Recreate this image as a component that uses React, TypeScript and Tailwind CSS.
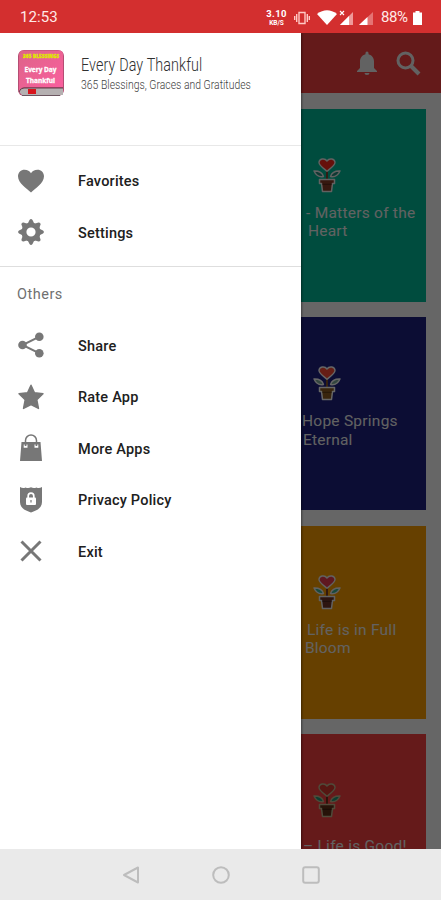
import React from 'react';

type Palette = { heart: string; leaf: string; pot: string; line: string };

type Card = {
  bg: string;
  textTop: string;
  lines: { text: string; className: string }[];
  palette: Palette;
};

const cards: Card[] = [
  {
    bg: 'bg-[#00bf9c]',
    textTop: 'pt-[11px]',
    lines: [
      { text: '- Matters of the', className: 'pl-[78px] tracking-[0.25px]' },
      { text: 'Heart', className: 'pl-[80px] tracking-[0.2px]' },
    ],
    palette: { heart: '#ff2a1c', leaf: '#2a8f80', pot: '#8a3d28', line: '#f3f3f3' },
  },
  {
    bg: 'bg-[#1e2182]',
    textTop: 'pt-[11px]',
    lines: [
      { text: 'Hope Springs', className: 'pl-[74px] tracking-[0.25px]' },
      { text: 'Eternal', className: 'pl-[75px] tracking-[0.2px]' },
    ],
    palette: { heart: '#ff4d35', leaf: '#7fae9d', pot: '#8f5d22', line: '#ffffff' },
  },
  {
    bg: 'bg-[#ffa000]',
    textTop: 'pt-[11px]',
    lines: [
      { text: 'Life is in Full', className: 'pl-[79px] tracking-[0.25px]' },
      { text: 'Bloom', className: 'pl-[77px] tracking-[0.2px]' },
    ],
    palette: { heart: '#ee3d50', leaf: '#3fb89a', pot: '#70362a', line: '#f3f3f3' },
  },
  {
    bg: 'bg-[#fc4343]',
    textTop: 'pt-[19px]',
    lines: [{ text: '– Life is Good!', className: 'pl-[75px] tracking-[0.25px]' }],
    palette: { heart: '#d8382f', leaf: '#1f9c7c', pot: '#603018', line: '#c5b990' },
  },
];

const FlowerPot = ({ heart, leaf, pot, line }: Palette) => (
  <svg width="28" height="35" viewBox="0 0 28 35" strokeLinejoin="round">
    <path d="M14 12v11" stroke={pot} strokeWidth="1.8" />
    <path
      d="M14 13.200C10 10 6 7.500 6 4.600 6 .500 11.800-.300 14 3 16.200-.300 22 .500 22 4.600c0 2.900-4 5.400-8 8.600Z"
      fill={heart}
      stroke={line}
      strokeWidth="1.400"
    />
    <path d="M1 13c5-.200 8 1 9.500 5.500C5.500 19.500 3 17.500 1 13Z" fill={leaf} stroke={line} strokeWidth="1.400" />
    <path d="M27 13c-5-.200-8 1-9.500 5.500C22.500 19.500 25 17.500 27 13Z" fill={leaf} stroke={line} strokeWidth="1.400" />
    <path d="M6.500 21.500h15v4h-2l-1 8h-9l-1-8h-2Z" fill={pot} stroke={line} strokeWidth="1.500" />
    <path d="M9 26.300h10" stroke="#000" strokeOpacity=".35" />
  </svg>
);

const HeartIcon = () => (
  <svg width="26" height="24" viewBox="0 0 26 24" fill="currentColor">
    <path d="M13 23.500C9 19.500 0 14.500 0 7.300 0 3.300 3 .7 6.500.7c3 0 5.300 1.400 6.500 3.500C14.200 2.100 16.500.7 19.500.7 23 .7 26 3.300 26 7.300c0 7.200-9 12.200-13 16.200Z" />
  </svg>
);

const teeth = [0, 45, 90, 135, 180, 225, 270, 315];

const GearIcon = () => (
  <svg width="26" height="26" viewBox="0 0 26 26" fill="currentColor">
    <circle cx="13" cy="13" r="7.100" fill="none" stroke="currentColor" strokeWidth="5" />
    {teeth.map((angle) => (
      <path key={angle} d="M9.300 5.500 11.500 1Q13-.8 14.500 1l2.200 4.500Z" transform={`rotate(${angle} 13 13)`} />
    ))}
  </svg>
);

const ShareIcon = () => (
  <svg width="26" height="26" viewBox="0 0 26 26" fill="currentColor">
    <path d="M21 4.800 4.500 13 21 21.200" fill="none" stroke="currentColor" strokeWidth="2" />
    <circle cx="21.300" cy="4.700" r="4.300" />
    <circle cx="4.500" cy="13" r="4.300" />
    <circle cx="21.300" cy="21.300" r="4.300" />
  </svg>
);

const StarIcon = () => (
  <svg width="26" height="26" viewBox="0 0 26 26" fill="currentColor" stroke="currentColor" strokeWidth="1.400" strokeLinejoin="round">
    <path d="m13 1.200 3.500 7.500 8.500 1-6.200 6L20.500 24.500 13 20.700 5.500 24.500l1.700-8.800L1 9.700l8.500-1Z" />
  </svg>
);

const BagIcon = () => (
  <svg width="26" height="28" viewBox="0 0 26 28" fill="currentColor">
    <path d="M7.500 12V6.500a5.500 5.500 0 0 1 11 0V12" fill="none" stroke="currentColor" strokeWidth="1.500" />
    <path fillRule="evenodd" d="M3.500 8h19L24 27H2ZM5.700 10.500v3.300h3.800v-3.300ZM16.500 10.500v3.300h3.800v-3.300Z" />
    <path d="M7.600 9v3M18.400 9v3" stroke="currentColor" strokeWidth="1.300" />
  </svg>
);

const ShieldIcon = () => (
  <svg width="26" height="27" viewBox="0 0 26 27" fill="currentColor">
    <path d="M2 1q2.800 1.800 5.500.5Q10.500 2.800 13 1.300q2.500 1.500 5.500.2Q21.200 2.800 24 1v15c0 6-5 8.500-11 10.500C7 24.500 2 22 2 16Z" />
    <rect x="8" y="11.500" width="10" height="7.500" rx="1" fill="#fff" />
    <path d="M10.200 12v-2a2.800 2.800 0 0 1 5.600 0v2" fill="none" stroke="#fff" strokeWidth="1.700" />
    <path d="M13 14v2.500" stroke="currentColor" strokeWidth="1.200" />
  </svg>
);

const ExitIcon = () => (
  <svg width="26" height="26" viewBox="0 0 26 26" stroke="currentColor" strokeWidth="3">
    <path d="m3.500 3.500 19 19M22.500 3.500l-19 19" />
  </svg>
);

const BookLogo = () => (
  <svg width="48" height="48" viewBox="0 0 48 48">
    <defs>
      <linearGradient id="cover" x1="0" y1="0" x2="1" y2="1">
        <stop offset="0" stopColor="#dd6488" />
        <stop offset="1" stopColor="#fb5f9f" />
      </linearGradient>
    </defs>
    <rect x="1" y="1" width="46" height="46" rx="6" fill="#b54d73" />
    <path d="M2 39h44v7H5q-3-2-3-7Z" fill="#b5b0b1" />
    <path d="M6 1.500h36q4 0 4 4V38H8q-4 0-6 4V6q0-4.500 4-4.500Z" fill="url(#cover)" />
    <path d="M2 43q1-4 5-4h39" fill="none" stroke="#6b3a4a" strokeWidth="1" />
    <path d="M5 46.500h38" stroke="#6b5660" strokeWidth="1.200" />
    <path d="M11 40h8v5h-8Z" fill="#d8141c" />
    <g fontFamily="Open Sans, sans-serif" textAnchor="middle">
      <text x="24" y="8.800" fontSize="4.300" fontWeight="800" fill="#dfe600" stroke="#dfe600" strokeWidth=".4" textLength="36">365 BLESSINGS</text>
      <text x="23.500" y="22.500" fontSize="7.500" fontWeight="700" fill="#fff" stroke="#fff" strokeWidth=".3" textLength="32" lengthAdjust="spacingAndGlyphs">Every Day</text>
      <text x="23.500" y="33.500" fontSize="7.500" fontWeight="700" fill="#fff" stroke="#fff" strokeWidth=".3" textLength="29" lengthAdjust="spacingAndGlyphs">Thankful</text>
    </g>
  </svg>
);

const mainItems = [
  { label: 'Favorites', Icon: HeartIcon },
  { label: 'Settings', Icon: GearIcon },
];

const otherItems = [
  { label: 'Share', Icon: ShareIcon },
  { label: 'Rate App', Icon: StarIcon },
  { label: 'More Apps', Icon: BagIcon },
  { label: 'Privacy Policy', Icon: ShieldIcon },
  { label: 'Exit', Icon: ExitIcon },
];

const MenuItem = ({ label, Icon }: { label: string; Icon: React.FC }) => (
  <li className="flex h-[51.5px] items-center">
    <span className="ml-[17.5px] flex w-[60.5px] shrink-0 pb-px text-[#777777]">
      <Icon />
    </span>
    <span className="pt-0.5 text-[14.5px] font-medium tracking-[0.2px] text-[#202020]">{label}</span>
  </li>
);

const StatusBar = () => (
  <header className="flex h-[33px] shrink-0 items-center bg-[#d32f2f] pt-0.5 pl-5 text-[#ffe9e7]">
    <span className="w-[246px] text-[15px] tracking-[0.1px]">12:53</span>
    <span className="flex w-[21px] flex-col items-center font-bold text-white">
      <span className="text-[9.5px] leading-[11px] tracking-[0.3px]">3.10</span>
      <span className="text-[6.5px] leading-[8px]">KB/S</span>
    </span>
    <svg className="ml-[7px]" width="16" height="14" viewBox="0 0 16 14" fill="none" stroke="#ffc9c5" strokeWidth="1.400">
      <path d="M5 1.500h6v11H5ZM2.700 3v8M13.300 3v8M.7 5v4M15.300 5v4" />
    </svg>
    <svg className="ml-[7px]" width="20" height="15" viewBox="0 0 20 15">
      <path d="M0 4Q10-3.500 20 4L10 15Z" fill="#fff" />
    </svg>
    <svg className="ml-[2px]" width="15" height="16" viewBox="0 0 15 16">
      <path d="M14 2v13H1Z" fill="#ef9a9a" />
      <path d="M10 6v9H1Z" fill="#fff" />
      <path d="m1 1 4 4M5 1 1 5" stroke="#fff" strokeWidth="1.100" />
    </svg>
    <svg className="ml-[5px]" width="14" height="16" viewBox="0 0 14 16">
      <path d="M14 2v13H0Z" fill="#e57373" />
      <path d="M8.500 7v8H0Z" fill="#fff" />
    </svg>
    <span className="ml-[8px] w-[32px] text-[15px] tracking-[-0.4px]">88%</span>
    <svg width="9" height="14" viewBox="0 0 9 14" fill="#fff">
      <path d="M2.500 0h4v1.500H9V14H0V1.500h2.500Z" />
    </svg>
  </header>
);

const Drawer = () => (
  <aside className="absolute inset-y-0 left-0 w-[301px] bg-white shadow-[1px_0_2px_rgba(0,0,0,0.4)]">
    <div className="flex h-[113px] border-b border-[#e8e8e8] pt-[16px] pl-[17px]">
      <BookLogo />
      <div className="ml-[16px] w-[190px] pt-[5px] whitespace-nowrap">
        <h1 className="origin-left scale-x-[0.775] text-[18.5px] leading-[22px] font-light tracking-[0.15px] text-[#303030]">
          Every Day Thankful
        </h1>
        <p className="origin-left scale-x-[0.83] text-[12.5px] leading-[17px] font-light tracking-[0.03px] text-[#404040]">
          365 Blessings, Graces and Gratitudes
        </p>
      </div>
    </div>
    <ul className="h-[121px] border-b border-[#dedede] pt-[9.5px]">
      {mainItems.map((item) => (
        <MenuItem key={item.label} {...item} />
      ))}
    </ul>
    <h2 className="h-[53px] pt-[17px] pl-[17px] text-[14.5px] leading-[22px] tracking-[0.5px] text-[#707070]">Others</h2>
    <ul>
      {otherItems.map((item) => (
        <MenuItem key={item.label} {...item} />
      ))}
    </ul>
  </aside>
);

export default function App() {
  return (
    <div className="flex h-[900px] w-[441px] flex-col overflow-hidden font-['Roboto',sans-serif]">
      <StatusBar />
      <main className="relative h-[816px] shrink-0 overflow-hidden bg-white">
        <div className="flex h-[60px] items-center justify-end gap-[19px] bg-[#fa4343] pr-5 text-[#f5f5f5]">
          <svg width="20" height="24" viewBox="0 0 20 24" fill="currentColor">
            <path d="M8.500 2a1.500 1.500 0 0 1 3 0v1.200C15 4 17 7 17 10.500V17l3 3v1H0v-1l3-3v-6.500C3 7 5 4 8.500 3.200ZM7.500 22h5a2.500 2 0 0 1-5 0Z" />
          </svg>
          <svg width="25" height="25" viewBox="0 0 25 25" fill="none" stroke="currentColor">
            <circle cx="9.500" cy="9.500" r="7.500" strokeWidth="3" />
            <path d="m15 15 8 8" strokeWidth="4" />
          </svg>
        </div>
        <div className="flex flex-col items-end gap-[15.5px] pt-[15.5px] pr-[15px]">
          {cards.map((card, i) => (
            <section key={i} className={`h-[193px] w-[198px] shrink-0 pt-[49px] ${card.bg}`}>
              <div className="ml-[85px]">
                <FlowerPot {...card.palette} />
              </div>
              <div className={`text-[15.5px] leading-[18.5px] whitespace-nowrap text-[#f5f5f5] ${card.textTop}`}>
                {card.lines.map((line) => (
                  <p key={line.text} className={line.className}>
                    {line.text}
                  </p>
                ))}
              </div>
            </section>
          ))}
        </div>
        <div className="absolute inset-0 bg-black/60" />
        <Drawer />
      </main>
      <nav className="flex h-[51px] shrink-0 items-center justify-center gap-[72px] bg-[#eaeaea] text-[#bdbdbd]">
        <svg width="18" height="18" viewBox="0 0 18 18" fill="none" stroke="currentColor" strokeWidth="2" strokeLinejoin="round">
          <path d="M16 1.500v15L2 9Z" />
        </svg>
        <svg width="18" height="18" viewBox="0 0 18 18" fill="none" stroke="currentColor" strokeWidth="2">
          <circle cx="9" cy="9" r="7.800" />
        </svg>
        <svg width="18" height="18" viewBox="0 0 18 18" fill="none" stroke="currentColor" strokeWidth="2">
          <rect x="1.200" y="1.200" width="15.600" height="15.600" rx="2" />
        </svg>
      </nav>
    </div>
  );
}
